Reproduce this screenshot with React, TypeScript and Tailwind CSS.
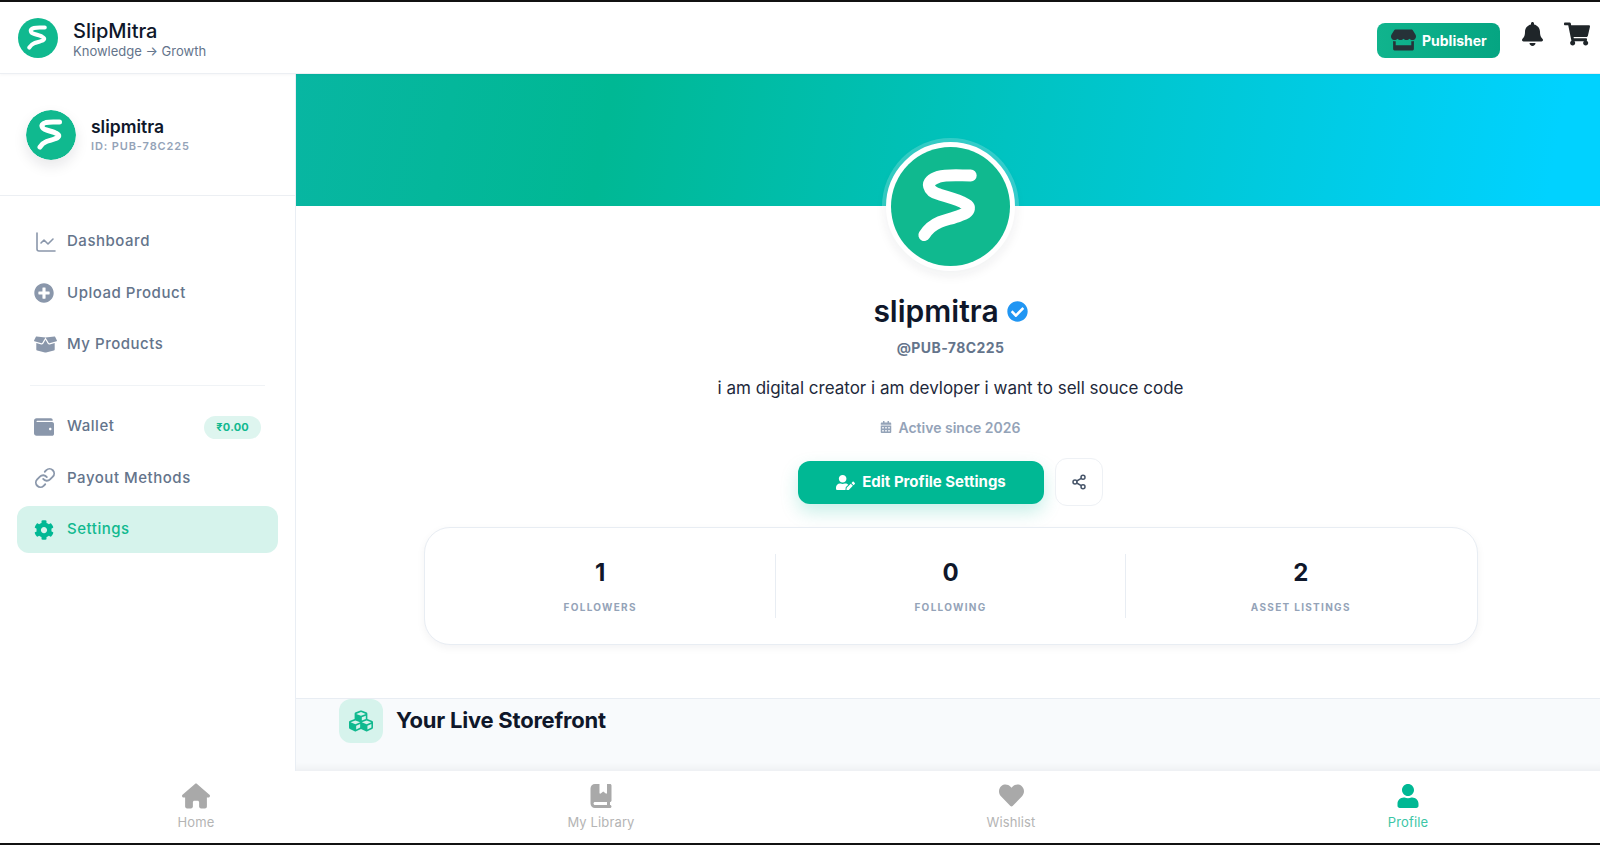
import { ChartLine, Link, Share2 } from "lucide-react";
import type { ReactNode } from "react";
import {
  FaBell,
  FaBoxOpen,
  FaCalendarAlt,
  FaCheckCircle,
  FaCog,
  FaCubes,
  FaHeart,
  FaPlusCircle,
  FaShoppingCart,
  FaStore,
  FaUser,
  FaUserEdit,
  FaWallet,
} from "react-icons/fa";
import { FaBookBookmark, FaHouse } from "react-icons/fa6";

function Logo({ className }: { className: string }) {
  return (
    <svg viewBox="0 0 100 100" className={className}>
      <circle cx="50" cy="50" r="50" fill="#10b98f" />
      <path
        d="M67 24 C58 24 47 23 40 25 C34 27 31 30 32 33 C33 37 37 39 41 40 C48 42 55 44 59 46 C63 48 66 49 65.5 52 C65 55 62 56 58 57.5 C52 60 46 61 41 63 C35 65.5 31 69 28 74"
        fill="none"
        stroke="#fff"
        strokeWidth="10"
        strokeLinecap="round"
        strokeLinejoin="round"
      />
    </svg>
  );
}

function NavRow({
  icon,
  label,
  active,
  badge,
}: {
  icon: ReactNode;
  label: string;
  active?: boolean;
  badge?: string;
}) {
  return (
    <div
      className={
        active
          ? "flex h-[47px] items-center rounded-xl bg-[#d6f3ec] pl-[17px] pr-4 text-[#10b98f]"
          : "flex h-[47px] items-center rounded-xl pl-[17px] pr-4 text-[#64748b]"
      }
    >
      <span
        className={
          active
            ? "flex w-[33px] shrink-0 items-center text-[#00b894]"
            : "flex w-[33px] shrink-0 items-center text-[#8a97ab]"
        }
      >
        {icon}
      </span>
      <span className="text-[15px] font-medium tracking-[0.035em]">{label}</span>
      {badge && (
        <span className="ml-auto mr-[1px] mt-[2px] rounded-full bg-[#def5ef] px-3 py-[3px] text-[11px] font-bold tracking-[0.02em] text-[#10b98f]">
          {badge}
        </span>
      )}
    </div>
  );
}

function Stat({ value, label, divider }: { value: string; label: string; divider?: boolean }) {
  return (
    <div
      className={
        divider
          ? "flex h-[64px] flex-1 flex-col items-center border-r border-[#e8edf3] pt-[2px]"
          : "flex h-[64px] flex-1 flex-col items-center pt-[2px]"
      }
    >
      <span className="text-[24px] leading-[34px] font-bold text-[#0f172a]">{value}</span>
      <span className="mt-[10px] text-[10px] leading-[14px] font-bold tracking-[0.13em] text-[#94a3b8]">
        {label}
      </span>
    </div>
  );
}

function Tab({
  icon,
  label,
  active,
}: {
  icon: ReactNode;
  label: string;
  active?: boolean;
}) {
  return (
    <div
      className={
        active
          ? "flex flex-col items-center text-[#00b894]"
          : "flex flex-col items-center text-[#a9a9a9]"
      }
    >
      <span className="flex h-[26px] items-center">{icon}</span>
      <span
        className={
          active
            ? "mt-[3px] text-[13px] leading-[20px] tracking-[0.01em] text-[#3cc6a6]"
            : "mt-[3px] text-[13px] leading-[20px] tracking-[0.01em] text-[#b4b4b4]"
        }
      >
        {label}
      </span>
    </div>
  );
}

export default function App() {
  return (
    <div className="flex h-screen flex-col overflow-hidden border-y-2 border-[#111] bg-white font-['Inter','Liberation_Sans',sans-serif]">
      <header className="z-20 flex h-[72px] shrink-0 items-center border-b border-[#eceff3] bg-white pr-[10px] pl-[18px] shadow-[0_1px_3px_rgba(15,23,42,0.04)]">
        <Logo className="h-10 w-10" />
        <div className="mt-[3px] ml-[15px]">
          <p className="text-[20px] leading-[24px] font-medium text-[#0f172a]">SlipMitra</p>
          <p className="text-[13px] leading-[16px] text-[#64748b]">Knowledge → Growth</p>
        </div>
        <div className="mt-[5px] ml-auto flex h-[35px] w-[123px] items-center rounded-lg bg-gradient-to-r from-[#10b48d] to-[#05a582] pl-[14px] text-white">
          <FaStore className="h-[22px] w-[25px] text-[#263238]" />
          <span className="ml-[6px] text-[14px] font-bold">Publisher</span>
        </div>
        <FaBell className="mb-[8px] ml-[22px] h-[24px] w-[21px] text-[#1f2529]" />
        <FaShoppingCart className="mb-[8px] ml-[21px] h-[24px] w-[26px] text-[#1f2529]" />
      </header>

      <div className="flex min-h-0 flex-1">
        <aside className="flex w-[296px] shrink-0 flex-col border-r border-[#e9eef4] bg-white">
          <div className="flex h-[122px] shrink-0 items-center border-b border-[#eceff3] pl-[26px]">
            <Logo className="h-[50px] w-[50px] rounded-full shadow-[0_6px_14px_rgba(15,23,42,0.1)]" />
            <div className="ml-[15px]">
              <p className="text-[17.5px] leading-[22px] font-semibold text-[#0f172a]">slipmitra</p>
              <p className="text-[11px] leading-[16px] font-semibold tracking-[0.08em] text-[#94a3b8]">
                ID: PUB-78C225
              </p>
            </div>
          </div>
          <nav className="flex flex-col px-[17px] pt-[22px]">
            <div className="flex flex-col gap-[4.5px]">
              <NavRow icon={<ChartLine size={24} strokeWidth={1.6} />} label="Dashboard" />
              <NavRow icon={<FaPlusCircle size={20} />} label="Upload Product" />
              <NavRow icon={<FaBoxOpen size={23} />} label="My Products" />
            </div>
            <div className="mx-[13px] my-[17px] h-px bg-[#f0f3f6]" />
            <div className="flex flex-col gap-[4.5px]">
              <NavRow icon={<FaWallet size={20} />} label="Wallet" badge="₹0.00" />
              <NavRow icon={<Link size={22} strokeWidth={2} />} label="Payout Methods" />
              <NavRow icon={<FaCog size={20} />} label="Settings" active />
            </div>
          </nav>
        </aside>

        <main className="flex min-w-0 flex-1 flex-col">
          <div className="h-[132px] shrink-0 bg-[linear-gradient(100deg,#08b6a2_0%,#00b894_24%,#00d2ff_96%)]" />
          <div className="flex flex-col items-center pl-[5px]">
            <div className="-mt-[64px] rounded-full border-[5px] border-white bg-white shadow-[0_0_0_4px_rgba(255,255,255,0.2),0_4px_12px_rgba(15,23,42,0.08)]">
              <Logo className="h-[119px] w-[119px]" />
            </div>
            <div className="mt-[23px] flex h-[34px] items-center">
              <h1 className="text-[30px] leading-[34px] font-semibold text-[#0f172a]">slipmitra</h1>
              <FaCheckCircle className="ml-2 text-[#2196f3]" size={21} />
            </div>
            <p className="mt-[10px] text-[14px] leading-[20px] font-bold tracking-[0.03em] text-[#64748b]">
              @PUB-78C225
            </p>
            <p className="mt-[18px] text-[17px] leading-[24px] text-[#1e293b]">
              i am digital creator i am devloper i want to sell souce code
            </p>
            <div className="mt-[17px] flex h-[20px] items-center text-[#94a3b8]">
              <FaCalendarAlt size={12} />
              <span className="ml-[6px] text-[14px] font-semibold">Active since 2026</span>
            </div>
            <div className="mt-[21px] flex items-center gap-[11px]">
              <div className="flex h-[43px] w-[246px] items-center justify-center rounded-xl bg-[#00b894] text-white shadow-[0_8px_18px_rgba(0,184,148,0.22)]">
                <FaUserEdit size={19} />
                <span className="ml-[7px] text-[15px] font-bold">Edit Profile Settings</span>
              </div>
              <div className="flex h-[48px] w-[48px] items-center justify-center rounded-xl border border-[#eef1f5] bg-white text-[#475569]">
                <Share2 size={16} strokeWidth={2.25} />
              </div>
            </div>
            <div className="mt-[21px] flex h-[118px] w-[1054px] items-center rounded-[26px] border border-[#e8edf3] bg-white px-[1px] shadow-[0_3px_8px_rgba(15,23,42,0.05)]">
              <div className="flex flex-1">
                <Stat value="1" label="FOLLOWERS" divider />
                <Stat value="0" label="FOLLOWING" divider />
                <Stat value="2" label="ASSET LISTINGS" />
              </div>
            </div>
          </div>
          <section className="mt-[53px] flex min-h-0 flex-1 items-start border-t border-[#e8edf3] bg-[#f8fafc] pl-[43px] shadow-[inset_0_-10px_8px_-8px_rgba(15,23,42,0.06)]">
            <div className="flex h-[44px] w-[44px] items-center justify-center rounded-xl bg-[#d6f3ec] text-[#10b98f]">
              <FaCubes size={24} />
            </div>
            <h2 className="mt-[7px] ml-[13px] text-[22px] leading-[28px] font-bold tracking-[-0.01em] text-[#0f172a]">
              Your Live Storefront
            </h2>
          </section>
        </main>
      </div>

      <footer className="grid h-[72px] shrink-0 grid-cols-[392px_418px_402px_388px] items-center bg-white">
        <Tab icon={<FaHouse size={28} />} label="Home" />
        <Tab icon={<FaBookBookmark size={24} />} label="My Library" />
        <Tab icon={<FaHeart size={25} />} label="Wishlist" />
        <div className="pl-[4px]">
          <Tab icon={<FaUser size={24} />} label="Profile" active />
        </div>
      </footer>
    </div>
  );
}
